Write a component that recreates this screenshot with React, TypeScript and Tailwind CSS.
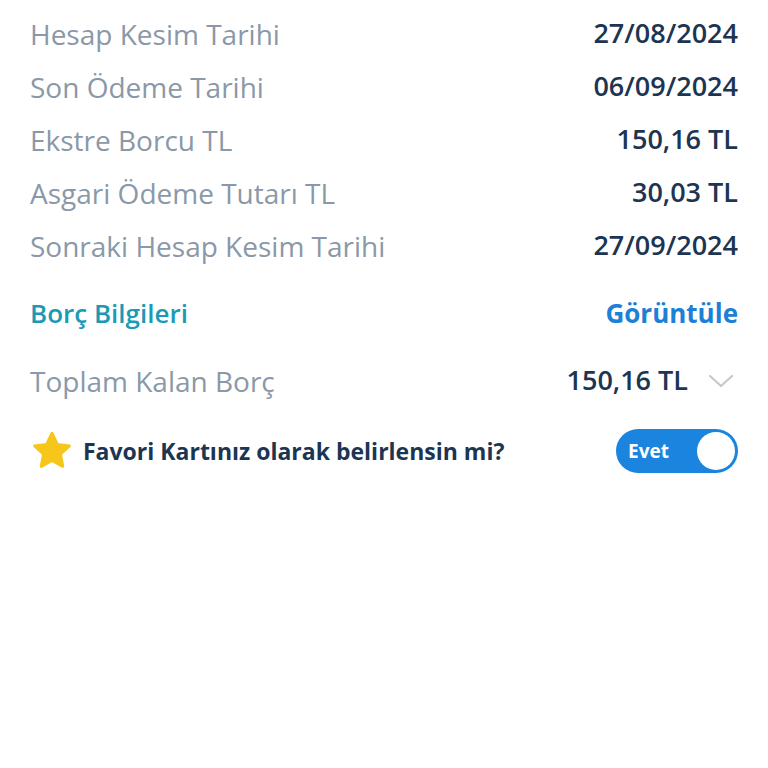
import React from 'react';

const rows = [
  { label: 'Hesap Kesim Tarihi', value: '27/08/2024' },
  { label: 'Son Ödeme Tarihi', value: '06/09/2024' },
  { label: 'Ekstre Borcu TL', value: '150,16 TL' },
  { label: 'Asgari Ödeme Tutarı TL', value: '30,03 TL' },
  { label: 'Sonraki Hesap Kesim Tarihi', value: '27/09/2024' },
];

export default function App() {
  return (
    <div className="min-h-[768px] bg-white px-[30px] pt-[7px] font-['Open_Sans',sans-serif]">
      {rows.map((r) => (
        <div key={r.label} className="flex h-[53px] items-center justify-between">
          <span className="text-[28px] text-[#8a98a8]">{r.label}</span>
          <span className="text-[27px] font-semibold text-[#1c3552]">{r.value}</span>
        </div>
      ))}

      <div className="mt-[15px] flex h-[53px] items-center justify-between">
        <span className="text-[26px] font-semibold text-[#1a9ab6]">Borç Bilgileri</span>
        <span className="text-[26px] font-bold text-[#1d80d8]">Görüntüle</span>
      </div>

      <div className="mt-[14px] flex h-[53px] items-center justify-between">
        <span className="text-[28px] text-[#8a98a8]">Toplam Kalan Borç</span>
        <div className="flex items-center gap-[20px]">
          <span className="text-[27px] font-semibold text-[#1c3552]">150,16 TL</span>
          <svg className="mr-[4px] h-[14px] w-[26px]" viewBox="0 0 26 14" fill="none" stroke="#c4c9ce" strokeWidth="2.2" strokeLinecap="round" strokeLinejoin="round">
            <path d="M2 2l11 10L24 2" />
          </svg>
        </div>
      </div>

      <div className="mt-[22px] flex h-[44px] items-center justify-between">
        <div className="flex items-center gap-[9px]">
          <svg className="h-[44px] w-[44px]" viewBox="0 0 24 24">
            <path
              d="M12 2.3l2.9 6.1 6.6.8-4.9 4.6 1.3 6.6L12 17.1l-5.9 3.3 1.3-6.6-4.9-4.6 6.6-.8z"
              fill="#f7c61b"
              stroke="#f7c61b"
              strokeWidth="1.6"
              strokeLinejoin="round"
            />
          </svg>
          <span className="text-[23px] font-bold text-[#1c3552]">Favori Kartınız olarak belirlensin mi?</span>
        </div>
        <button className="flex h-[44px] w-[122px] items-center justify-between rounded-full bg-[#1a84de] pl-[12px] pr-[3px]">
          <span className="text-[19px] font-bold text-white">Evet</span>
          <span className="h-[38px] w-[38px] rounded-full bg-white" />
        </button>
      </div>
    </div>
  );
}
